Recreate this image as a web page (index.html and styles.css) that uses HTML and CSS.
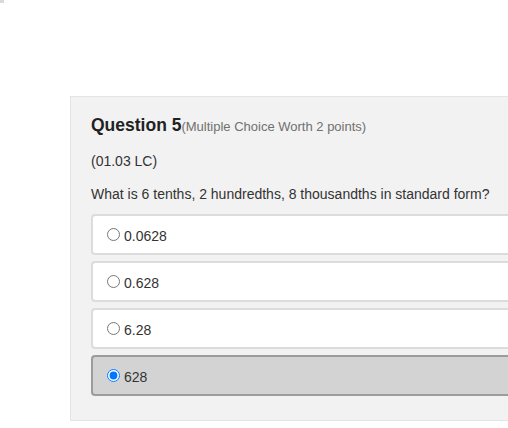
FILE: index.html
```html
<!DOCTYPE html>
<html>
<head>
<meta charset="utf-8">
<link rel="stylesheet" href="styles.css">
</head>
<body>
<div class="corner-mark"></div>
<div class="panel">
  <div class="heading"><span class="q-title">Question 5</span><span class="q-meta">(Multiple Choice Worth 2 points)</span></div>
  <div class="code">(01.03 LC)</div>
  <div class="prompt">What is 6 tenths, 2 hundredths, 8 thousandths in standard form?</div>
  <div class="options">
    <label class="option"><input type="radio" name="a"><span>0.0628</span></label>
    <label class="option"><input type="radio" name="a"><span>0.628</span></label>
    <label class="option"><input type="radio" name="a"><span>6.28</span></label>
    <label class="option selected"><input type="radio" name="a" checked><span>628</span></label>
  </div>
</div>
</body>
</html>
```
FILE: styles.css
```css
html, body {
  margin: 0;
  padding: 0;
  background: #ffffff;
  overflow: hidden;
  width: 508px;
  height: 428px;
}
body {
  font-family: "Liberation Sans", Arial, sans-serif;
  color: #333333;
}
.corner-mark {
  width: 4px;
  height: 3px;
  background: #d9d9d9;
}
.panel {
  margin-top: 93px;
  margin-left: 70px;
  width: 460px;
  box-sizing: border-box;
  background: #f2f2f2;
  border: 1px solid #e4e4e4;
  padding: 18px 0 24px 20px;
}
.heading {
  line-height: 21px;
  height: 21px;
}
.q-title {
  font-size: 17.5px;
  font-weight: bold;
  color: #222222;
}
.q-meta {
  font-size: 13px;
  color: #707070;
}
.code {
  margin-top: 17px;
  font-size: 14px;
  line-height: 16px;
  color: #333333;
}
.prompt {
  margin-top: 17px;
  font-size: 14px;
  line-height: 16px;
  color: #333333;
}
.options {
  margin-top: 12px;
  display: flex;
  flex-direction: column;
  gap: 6px;
}
.option {
  display: flex;
  align-items: center;
  height: 41px;
  box-sizing: border-box;
  background: #ffffff;
  border: 2px solid #dcdcdc;
  border-right: none;
  border-radius: 4px 0 0 4px;
  padding-left: 11px;
  font-size: 14px;
  color: #333333;
}
.option input {
  width: 13px;
  height: 13px;
  margin: 0 4px 0 3px;
}
.option span {
  padding-top: 2px;
}
.option.selected {
  background: #d3d3d3;
  border-color: #9c9c9c;
}
```
